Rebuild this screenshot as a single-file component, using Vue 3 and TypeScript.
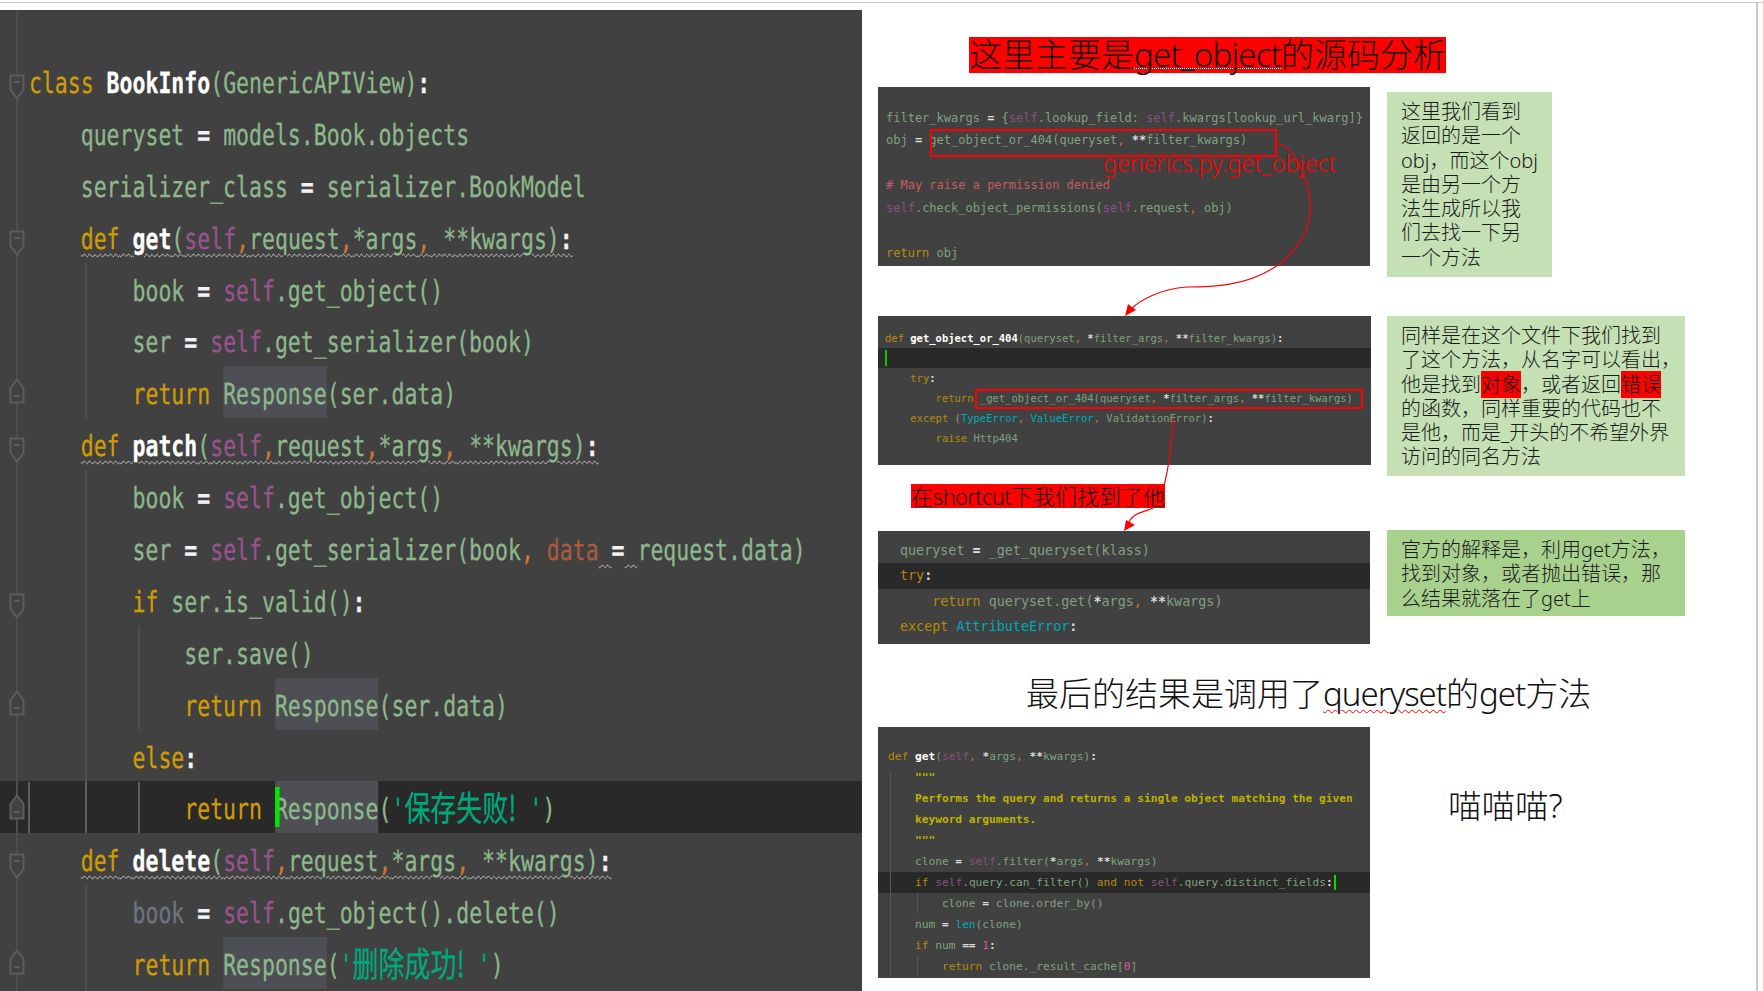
<script setup lang="ts">
interface Tok { c: string; t: string }
const parse = (s: string): Tok[] =>
  s.split('|').filter(Boolean).map((p) => {
    const i = p.indexOf('~')
    return { c: p.slice(0, i) || 'n', t: p.slice(i + 1) }
  })

const WAVE = 'u'
const big = [
  'k~class|~ |f~BookInfo|~(GenericAPIView)|w~:',
  '~    queryset |w~=|~ models.Book.objects',
  '~    serializer_class |w~=|~ serializer.BookModel',
  `~    |k ${WAVE}~def|n ${WAVE}~ |f ${WAVE}~get|n ${WAVE}~(|s ${WAVE}~self|c ${WAVE}~,|n ${WAVE}~request|c ${WAVE}~,|n ${WAVE}~*args|c ${WAVE}~,|n ${WAVE}~ **kwargs)|w ${WAVE}~:`,
  '~        book |w~=|~ |s~self|~.get_object()',
  '~        ser |w~=|~ |s~self|~.get_serializer(book)',
  '~        |k~return|~ |h~Response|~(ser.data)',
  `~    |k ${WAVE}~def|n ${WAVE}~ |f ${WAVE}~patch|n ${WAVE}~(|s ${WAVE}~self|c ${WAVE}~,|n ${WAVE}~request|c ${WAVE}~,|n ${WAVE}~*args|c ${WAVE}~,|n ${WAVE}~ **kwargs)|w ${WAVE}~:`,
  '~        book |w~=|~ |s~self|~.get_object()',
  `~        ser |w~=|~ |s~self|~.get_serializer(book|c~, |m~data|n ${WAVE}~ |w~=|n ${WAVE}~ |~request.data)`,
  '~        |k~if|~ ser.is_valid()|w~:',
  '~            ser.save()',
  '~            |k~return|~ |h~Response|~(ser.data)',
  '~        |k~else|w~:',
  "~            |k~return|~ |h cr~Response|~(|t~'|z~保存失败!|t~ '|~)",
  `~    |k ${WAVE}~def|n ${WAVE}~ |f ${WAVE}~delete|n ${WAVE}~(|s ${WAVE}~self|c ${WAVE}~,|n ${WAVE}~request|c ${WAVE}~,|n ${WAVE}~*args|c ${WAVE}~,|n ${WAVE}~ **kwargs)|w ${WAVE}~:`,
  '~        |d~book|~ |w~=|~ |s~self|~.get_object().delete()',
  "~        |k~return|~ |h~Response|~(|t~'|z~删除成功!|t~ '|~)",
].map(parse)
const bigActive = 14

const RH = 51.9
const TOP = 45
const rowTop = (n: number) => TOP + (n - 1) * RH

const guides = [
  { x: 85, a: 5, b: 7 },
  { x: 85, a: 9, b: 14 },
  { x: 85, a: 15, b: 15, hot: true },
  { x: 85, a: 17, b: 19 },
  { x: 138, a: 12, b: 13 },
  { x: 138, a: 15, b: 15, hot: true },
  { x: 28, a: 15, b: 15, hot: true },
].map((g) => ({
  left: g.x + 'px',
  top: rowTop(g.a) + 'px',
  height: (g.b - g.a + 1) * RH + 'px',
  hot: !!g.hot,
}))

const folds = [
  { r: 1, up: false }, { r: 4, up: false }, { r: 7, up: true }, { r: 8, up: false },
  { r: 11, up: false }, { r: 13, up: true }, { r: 15, up: true }, { r: 16, up: false }, { r: 18, up: true },
].map((f) => ({ up: f.up, top: rowTop(f.r) + (f.up ? 12 : 19) + 'px' }))

const b1 = [
  '~filter_kwargs |w~=|~ {|s~self|~.lookup_field: |s~self|~.kwargs[lookup_url_kwarg]}',
  '~obj |w~=|~ get_object_or_404(queryset|c~,|~ |w~**|~filter_kwargs)',
  '~ ',
  '|r~# May raise a permission denied',
  '|s~self|~.check_object_permissions(|s~self|~.request|c~,|~ obj)',
  '~ ',
  '|k~return|~ obj',
].map(parse)

const b2 = [
  'k~def|~ |f~get_object_or_404|~(queryset|c~,|~ |w~*|~filter_args|c~,|~ |w~**|~filter_kwargs)|w~:',
  '~ ',
  '~    |k~try|w~:',
  '~        |k~return|~ _get_object_or_404(queryset|c~,|~ |w~*|~filter_args|c~,|~ |w~**|~filter_kwargs)',
  '~    |k~except|~ (|b~TypeError|c~,|~ |b~ValueError|c~,|~ ValidationError)|w~:',
  '~        |k~raise|~ Http404',
].map(parse)

const b3 = [
  '~queryset |w~=|~ _get_queryset(klass)',
  'k~try|w~:',
  '~    |k~return|~ queryset.get(|w~*|~args|c~,|~ |w~**|~kwargs)',
  'k~except|~ |b~AttributeError|w~:',
].map(parse)

const b4 = [
  'k~def|~ |f~get|~(|s~self|c~,|~ |w~*|~args|c~,|~ |w~**|~kwargs)|w~:',
  '~    |y~"""',
  '~    |y~Performs the query and returns a single object matching the given',
  '~    |y~keyword arguments.',
  '~    |y~"""',
  '~    clone |w~=|~ |s~self|~.filter(|w~*|~args|c~,|~ |w~**|~kwargs)',
  '~    |k~if|~ |s~self|~.query.can_filter() |k~and not|~ |s~self|~.query.distinct_fields|w cr2~:',
  '~        clone |w~=|~ clone.order_by()',
  '~    num |w~=|~ |b~len|~(clone)',
  '~    |k~if|~ num |w~==|~ |p~1|w~:',
  '~        |k~return|~ clone._result_cache[|p~0|~]',
].map(parse)
</script>

<template>
  <div class="root">
    <div class="rule"></div>
    <div class="sheet">
      <section class="editor">
        <span class="gutter-line"></span>
        <span
          v-for="(g, i) in guides"
          :key="'g' + i"
          class="guide"
          :class="{ hot: g.hot }"
          :style="{ left: g.left, top: g.top, height: g.height }"
        ></span>
        <svg
          v-for="(f, i) in folds"
          :key="'f' + i"
          class="fold"
          :class="{ up: f.up }"
          :style="{ top: f.top }"
          width="16"
          height="26"
          viewBox="0 0 16 26"
        >
          <path d="M1.5 1.5H14.5V16L8 24.5L1.5 16Z" fill="#414141" stroke="#5c5c5c" stroke-width="2" />
          <path d="M5 8H11" stroke="#5c5c5c" stroke-width="2" />
        </svg>
        <div class="big-code">
          <div v-for="(l, i) in big" :key="i" class="big-line" :class="{ active: i === bigActive }">
            <span v-for="(t, j) in l" :key="j" :class="t.c">{{ t.t }}</span>
          </div>
        </div>
      </section>

      <section class="right">
        <h1 class="title">这里主要是<span class="dotted">get_object</span>的源码分析</h1>

        <div class="row row1">
          <div class="code code1">
            <div v-for="(l, i) in b1" :key="i" class="ln">
              <span v-for="(t, j) in l" :key="j" :class="t.c">{{ t.t }}</span>
            </div>
            <span class="box box1"></span>
            <span class="src-label">generics.py.get_object</span>
          </div>
          <p class="note note-a">
            这里我们看到<br />返回的是一个<br />obj&#65292;而这个obj<br />是由另一个方<br />法生成所以我<br />们去找一下另<br />一个方法
          </p>
        </div>

        <div class="row row2">
          <div class="code code2">
            <div v-for="(l, i) in b2" :key="i" class="ln" :class="{ active: i === 1 }">
              <span v-if="i === 1" class="caret"></span>
              <span v-for="(t, j) in l" :key="j" :class="t.c">{{ t.t }}</span>
            </div>
            <span class="box box2"></span>
          </div>
          <p class="note note-b">
            同样是在这个文件下我们找到<br />了这个方法&#65292;从名字可以看出&#65292;<br />他是找到<mark>对象</mark>&#65292;或者返回<mark>错误</mark><br />的函数&#65292;同样重要的代码也不<br />是他&#65292;而是_开头的不希望外界<br />访问的同名方法
          </p>
        </div>

        <div class="shortcut">在<span class="tight">shortcut</span>下我们找到了他</div>

        <div class="row row3">
          <div class="code code3">
            <div v-for="(l, i) in b3" :key="i" class="ln" :class="{ active: i === 1 }">
              <span v-for="(t, j) in l" :key="j" :class="t.c">{{ t.t }}</span>
            </div>
          </div>
          <p class="note note-c">
            官方的解释是&#65292;利用get方法&#65292;<br />找到对象&#65292;或者抛出错误&#65292;那<br />么结果就落在了get上
          </p>
        </div>

        <h2 class="result">最后的结果是调用了<span class="red-wave">queryset</span>的<span class="tight-b">get</span>方法</h2>

        <div class="row row4">
          <div class="code code4">
            <span class="g4 g4a"></span>
            <span class="g4 g4b"></span>
            <span class="g4 g4c"></span>
            <div v-for="(l, i) in b4" :key="i" class="ln" :class="{ active: i === 6 }">
              <span v-for="(t, j) in l" :key="j" :class="t.c">{{ t.t }}</span>
            </div>
          </div>
          <p class="meow">喵喵喵?</p>
        </div>
      </section>
    </div>

    <svg class="arrows" width="1763" height="991" viewBox="0 0 1763 991" fill="none">
      <path d="M1277 143C1300 150 1312 190 1310 213C1308 240 1285 262 1270 270C1245 285 1215 287 1187 287C1160 289 1140 300 1130 310" stroke="#f00" stroke-width="1.2" />
      <path d="M1125 316L1136 310L1128 304Z" fill="#f00" />
      <path d="M1173 418C1172 445 1168 470 1164 486" stroke="#f00" stroke-width="1.2" />
      <path d="M1153 508C1145 512 1132 512 1128 525" stroke="#f00" stroke-width="1.2" />
      <path d="M1124 531L1135 525L1126 520Z" fill="#f00" />
    </svg>
  </div>
</template>

<style>
html, body { margin: 0; background: #fff; overflow: hidden; }
</style>

<style scoped>
.root {
  position: relative;
  width: 1763px;
  height: 991px;
  padding-top: 2px;
  box-sizing: border-box;
  background: #fff;
  overflow: hidden;
  font-family: "Noto Sans", "Noto Sans CJK SC", sans-serif;
  color: #111;
}
.rule { height: 1px; background: #c8c8c8; }
.sheet {
  display: flex;
  height: 988px;
  width: 1758px;
  box-sizing: border-box;
  border-right: 2px solid #c8c8c8;
  padding-top: 7px;
}

/* large editor */
.editor {
  position: relative;
  flex: 0 0 862px;
  background: #414141;
  overflow: hidden;
}
.gutter-line {
  position: absolute; left: 16px; top: 0; bottom: 0; width: 2px; background: #4d4d4d; z-index: 2;
}
.guide { position: absolute; width: 2px; background: #4e4e4e; z-index: 2; }
.guide.hot { background: #5e5e5e; }
.fold { position: absolute; left: 9px; z-index: 3; }
.fold.up { transform: scaleY(-1); }
.big-code {
  width: 1165px;
  padding: 45px 0 0 39px;
  box-sizing: border-box;
  transform: scaleX(0.7415);
  transform-origin: 0 0;
  font: 29px/57.5px "DejaVu Sans Mono", "Noto Sans CJK SC", monospace;
  text-rendering: geometricPrecision;
  -webkit-text-stroke: 0.3px currentColor;
}
.big-line { height: 51.9px; white-space: pre; margin-left: -39px; padding-left: 39px; }
.big-line.active { background: #292929; }
.big-line .h { display: inline-block; height: 51.9px; background: #4e4f54; }

/* tokens */
.n { color: #8db88c; }
.k { color: #cf9c06; }
.f { color: #fff; font-weight: 700; }
.w { color: #f2f2f2; font-weight: 700; }
.s { color: #97548f; }
.c { color: #cc7832; }
.m { color: #aa5a3e; }
.d { color: #6e7380; }
.t { color: #00a97c; }
.z { color: #00a97c; font-family: "Noto Sans CJK SC", sans-serif; font-size: 35px; line-height: 0; position: relative; top: 2px; }
.h { color: #8db88c; }
.u { text-decoration: underline wavy #cfcfcf 1.4px; text-underline-offset: 4px; }
.cr { position: relative; }
.cr::before {
  content: ""; position: absolute; left: 0; top: 6px; width: 6px; height: 40px; background: #00ea00;
}

/* right column */
.right {
  flex: 1;
  display: flex;
  flex-direction: column;
  padding: 27px 0 0 16px;
  min-width: 0;
}
.title {
  align-self: flex-start;
  margin: 0 0 0 91px;
  height: 36px;
  font-size: 33px;
  line-height: 36px;
  font-weight: 300;
  background: #f00;
  white-space: nowrap;
  color: #111;
}
.dotted { letter-spacing: -0.8px; text-decoration: underline dotted #fff 1px; text-underline-offset: 1px; }
.row { display: flex; gap: 17px; align-items: flex-start; }
.row1 { margin-top: 14px; }
.row2 { margin-top: 39px; }
.row3 { margin-top: 22px; }
.row4 { margin-top: 13px; gap: 0; }

.code {
  position: relative;
  flex: 0 0 492px;
  box-sizing: border-box;
  background: #414141;
  font-family: "DejaVu Sans Mono", monospace;
  white-space: pre;
  overflow: hidden;
}
.ln { position: relative; }
.ln.active { background: #292929; }
.code .n { color: #80a080; }
.code .k { color: #b58a08; }
.code .s { color: #85517f; }
.code .w { color: #dcdcdc; }
.code .r { color: #c45e5e; }
.code .b { color: #00aab4; }
.code .p { color: #d75c94; }
.code .y { color: #bdb200; font-weight: 600; }

.code1 { height: 179px; padding: 19.5px 0 0 8px; font-size: 12px; line-height: 22.5px; }
.code2 { height: 149px; padding: 12px 0 0 7px; font-size: 10.5px; line-height: 20px; flex-basis: 493px; margin-right: -1px; }
.code2 .ln, .code3 .ln, .code4 .ln { margin-left: -30px; padding-left: 30px; }
.code3 { height: 113px; margin-top: 1px; padding: 7px 0 0 22px; font-size: 13.4px; line-height: 25.3px; }
.code4 { height: 251px; padding: 19px 0 0 10px; font-size: 11.2px; line-height: 21px; }
.code2 .ln { height: 20px; }

.caret { position: absolute; left: 30px; top: 2px; width: 2px; height: 16px; background: #00d000; }
.cr2 { position: relative; }
.cr2::after {
  content: ""; position: absolute; right: -3px; top: -1px; width: 2px; height: 15px; background: #00e000;
}
.g4 { position: absolute; width: 1px; background: #565656; z-index: 1; }
.g4a { left: 12px; top: 46px; bottom: 0; }
.g4b { left: 39px; top: 166px; height: 21px; }
.g4c { left: 39px; top: 229px; bottom: 0; }

.box { position: absolute; border: 2px solid #f00; box-sizing: border-box; z-index: 2; }
.box1 { left: 52px; top: 42px; width: 347px; height: 28px; }
.box2 { left: 97px; top: 73px; width: 388px; height: 20px; }
.src-label {
  position: absolute;
  left: 225px;
  top: 59px;
  font: 300 23.2px/34px "Noto Sans", sans-serif;
  color: #f00;
  white-space: nowrap;
}

.note {
  margin: 0;
  box-sizing: border-box;
  padding: 8px 0 0 14px;
  font-size: 20px;
  line-height: 24.3px;
  font-weight: 300;
  white-space: nowrap;
  background: #c5e0b4;
  color: #1a1a1a;
}
.note mark { background: #f00; color: #111; }
.note-a { width: 165px; height: 185px; margin-top: 5px; }
.note-b { width: 298px; height: 160px; }
.note-c { width: 298px; height: 86px; background: #a9d18e; }

.shortcut {
  align-self: flex-start;
  margin: 8px 0 0 33px;
  height: 24px;
  font-size: 22px;
  line-height: 24px;
  font-weight: 300;
  background: #f00;
  white-space: nowrap;
  color: #111;
}
.tight { letter-spacing: -0.7px; }
.result {
  margin: 30px 0 0 148px;
  height: 40px;
  font-size: 33px;
  line-height: 40px;
  font-weight: 300;
  white-space: nowrap;
  color: #111;
}
.tight-b { letter-spacing: -1px; }
.red-wave { letter-spacing: -1px; text-decoration: underline wavy #f00 1px; text-underline-offset: 3px; }
.meow {
  margin: 56px 0 0 78px;
  font-size: 33.5px;
  line-height: 44px;
  font-weight: 300;
  white-space: nowrap;
  color: #111;
}
.arrows { position: absolute; left: 0; top: 0; pointer-events: none; z-index: 5; }
</style>
